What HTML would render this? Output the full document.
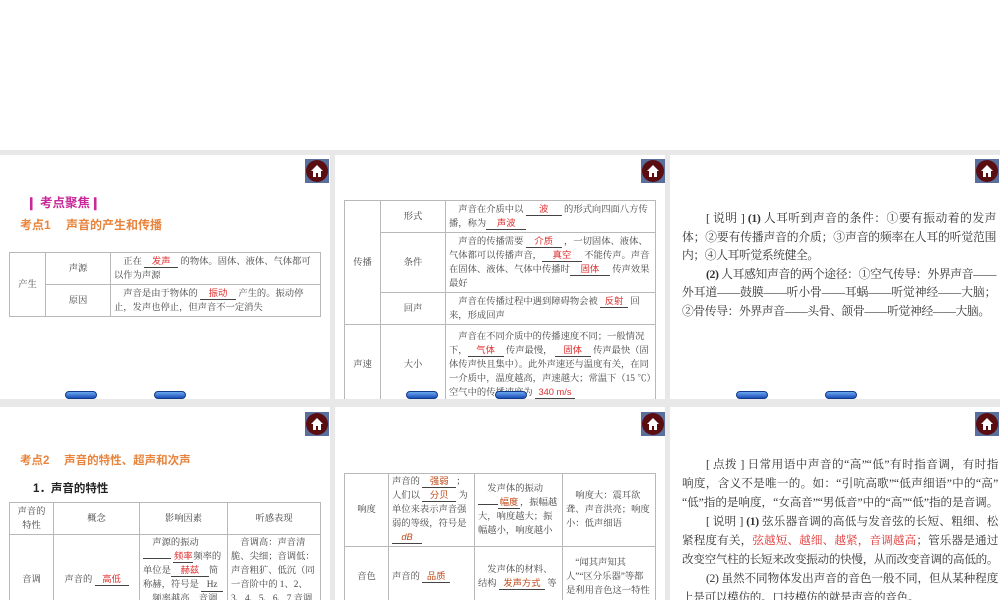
<!DOCTYPE html>
<html><head><meta charset="utf-8"><style>
*{margin:0;padding:0;box-sizing:border-box}
html,body{width:1000px;height:600px;overflow:hidden}
body{background:#fff;position:relative;font-family:"Liberation Serif","Noto Serif CJK SC",serif;color:#333}
.gray{position:absolute;left:0;top:150px;width:1000px;height:450px;background:#e8e8e8}
.s{position:absolute;background:#fff;overflow:hidden;width:330px;height:244px}
.home{position:absolute;width:24px;height:24px;background:#5a6f9c;}
.home:after{content:"";position:absolute;left:1px;top:1px;width:22px;height:22px;border-radius:50%;background:#5a0e12}
.home svg{position:absolute;left:5px;top:5px;z-index:2}
.nav{position:absolute;width:32px;height:8px;border-radius:4px;background:linear-gradient(#6aa8f0,#1d4fb8);border:1px solid #123a8a}
.a{position:absolute;white-space:nowrap}
table{position:absolute;border-collapse:collapse;font-size:9.3px;line-height:14px;color:#444}
td{border:1px solid #b8b8b8;vertical-align:middle;padding:1px 3px}
td.c{text-align:center}
.r{color:#e03030;font-family:"Liberation Sans","Noto Sans CJK SC",sans-serif}
.u{display:inline-block;border-bottom:1px solid #444;min-width:20px;text-align:center;line-height:12px}
.p{position:absolute;font-size:11.8px;line-height:18.5px;color:#333;font-family:"Liberation Serif","Noto Serif CJK SC",serif;letter-spacing:-0.4px}
.p div{text-indent:24px;text-align:justify}
.q{position:absolute;font-size:11.6px;line-height:19px;color:#333;font-family:"Liberation Serif","Noto Serif CJK SC",serif;letter-spacing:-0.3px}
.q div{white-space:nowrap;text-align:justify;text-align-last:justify;overflow:hidden}
.q div.i{padding-left:24px}
.q div.e{text-align-last:left}
</style></head><body>
<div class="gray"></div>

<!-- slide 1 -->
<div class="s" style="left:0;top:155px">
 <div class="home" style="left:305px;top:4px"><svg width="14" height="14" viewBox="0 0 14 14"><path d="M7 1L1 7h2v6h3V9h2v4h3V7h2z" fill="#fff"/></svg></div>
 <div class="a" style="left:26px;top:37px;font-size:12.5px;color:#c8289a;font-family:'Liberation Sans','Noto Sans CJK SC',sans-serif;font-weight:bold">❙ 考点聚焦❙</div>
 <div class="a" style="left:20px;top:61px;font-size:12px;color:#e8843c;font-family:'Liberation Sans','Noto Sans CJK SC',sans-serif;font-weight:bold">考点1　 声音的产生和传播</div>
 <table style="left:9px;top:97px;width:312px">
  <tr style="height:32px"><td class="c" rowspan="2" style="width:36px">产生</td><td class="c" style="width:65px">声源</td><td>　正在 <span class="u r" style="width:34px">发声</span> 的物体。固体、液体、气体都可以作为声源</td></tr>
  <tr style="height:32px"><td class="c">原因</td><td>　声音是由于物体的 <span class="u r" style="width:36px">振动</span> 产生的。振动停止，发声也停止，但声音不一定消失</td></tr>
 </table>
 <div class="nav" style="left:65px;top:236px"></div><div class="nav" style="left:154px;top:236px"></div>
</div>

<!-- slide 2 -->
<div class="s" style="left:335px;top:155px">
 <div class="home" style="left:306px;top:4px"><svg width="14" height="14" viewBox="0 0 14 14"><path d="M7 1L1 7h2v6h3V9h2v4h3V7h2z" fill="#fff"/></svg></div>
 <table style="left:9px;top:45px;width:312px">
  <tr style="height:32px"><td class="c" rowspan="3" style="width:36px">传播</td><td class="c" style="width:65px">形式</td><td>　声音在介质中以 <span class="u r" style="width:36px">波</span> 的形式向四面八方传播，称为<span class="u r" style="width:40px">声波</span></td></tr>
  <tr style="height:60px"><td class="c">条件</td><td>　声音的传播需要 <span class="u r" style="width:36px">介质</span> ，一切固体、液体、气体都可以传播声音，<span class="u r" style="width:40px">真空</span> 不能传声。声音在固体、液体、气体中传播时<span class="u r" style="width:40px">固体</span> 传声效果最好</td></tr>
  <tr style="height:32px"><td class="c">回声</td><td>　声音在传播过程中遇到障碍物会被 <span class="u r" style="width:28px">反射</span> 回来，形成回声</td></tr>
  <tr style="height:80px"><td class="c">声速</td><td class="c">大小</td><td>　声音在不同介质中的传播速度不同；一般情况下，<span class="u r" style="width:36px">气体</span> 传声最慢， <span class="u r" style="width:36px">固体</span> 传声最快（固体传声快且集中）。此外声速还与温度有关，在同一介质中，温度越高，声速越大；常温下（15 ℃）空气中的传播速度为 <span class="u r" style="width:40px">340 m/s</span></td></tr>
 </table>
 <div class="nav" style="left:71px;top:236px"></div><div class="nav" style="left:160px;top:236px"></div>
</div>

<!-- slide 3 -->
<div class="s" style="left:670px;top:155px">
 <div class="home" style="left:305px;top:4px"><svg width="14" height="14" viewBox="0 0 14 14"><path d="M7 1L1 7h2v6h3V9h2v4h3V7h2z" fill="#fff"/></svg></div>
 <div class="p" style="left:12px;top:54px;width:314px">
  <div>[ 说明 ] <b>(1)</b> 人耳听到声音的条件：①要有振动着的发声体；②要有传播声音的介质；③声音的频率在人耳的听觉范围内；④人耳听觉系统健全。</div>
  <div><b>(2)</b> 人耳感知声音的两个途径：①空气传导：外界声音——外耳道——鼓膜——听小骨——耳蜗——听觉神经——大脑；②骨传导：外界声音——头骨、颌骨——听觉神经——大脑。</div>
 </div>
 <div class="nav" style="left:66px;top:236px"></div><div class="nav" style="left:155px;top:236px"></div>
</div>

<!-- slide 4 -->
<div class="s" style="left:0;top:407px;height:193px">
 <div class="home" style="left:305px;top:5px"><svg width="14" height="14" viewBox="0 0 14 14"><path d="M7 1L1 7h2v6h3V9h2v4h3V7h2z" fill="#fff"/></svg></div>
 <div class="a" style="left:20px;top:45px;font-size:11.5px;color:#e8843c;font-family:'Liberation Sans','Noto Sans CJK SC',sans-serif;font-weight:bold">考点2　 声音的特性、超声和次声</div>
 <div class="a" style="left:33px;top:73px;font-size:11.5px;color:#222;font-weight:bold;font-family:'Liberation Sans','Noto Sans CJK SC',sans-serif">1．声音的特性</div>
 <table style="left:9px;top:95px;width:312px">
  <tr style="height:32px"><td class="c" style="width:44px">声音的<br>特性</td><td class="c" style="width:86px">概念</td><td class="c" style="width:88px">影响因素</td><td class="c">听感表现</td></tr>
  <tr style="height:90px"><td class="c">音调</td><td class="c">声音的 <span class="u r" style="width:34px">高低</span></td><td style="vertical-align:top">　声源的振动 <span class="u" style="width:28px"></span> <span class="u r" style="width:14px">频率</span>频率的单位是<span class="u r" style="width:38px">赫兹</span>简称赫，符号是 <span class="u" style="width:22px">Hz</span>，频率越高，音调越高</td><td style="vertical-align:top">　音调高：声音清脆、尖细；音调低：声音粗犷、低沉（同一音阶中的 1、2、3、4、5、6、7 音调</td></tr>
 </table>
</div>

<!-- slide 5 -->
<div class="s" style="left:335px;top:407px;height:193px">
 <div class="home" style="left:306px;top:5px"><svg width="14" height="14" viewBox="0 0 14 14"><path d="M7 1L1 7h2v6h3V9h2v4h3V7h2z" fill="#fff"/></svg></div>
 <table style="left:9px;top:66px;width:312px">
  <tr style="height:72px"><td class="c" style="width:44px">响度</td><td style="width:86px">声音的 <span class="u r" style="width:34px;color:#c04a1a">强弱</span>；人们以 <span class="u r" style="width:34px;color:#c04a1a">分贝</span> 为单位来表示声音强弱的等级，符号是 <span class="u r" style="width:30px;color:#c04a1a"><i>dB</i></span></td><td style="width:88px">　发声体的振动 <span class="u" style="width:14px"></span><span class="u r" style="width:22px;color:#c04a1a">幅度</span>，振幅越大，响度越大；振幅越小，响度越小</td><td>　响度大：震耳欲聋、声音洪亮；响度小：低声细语</td></tr>
  <tr style="height:60px"><td class="c">音色</td><td>声音的 <span class="u r" style="width:28px;color:#c04a1a">品质</span></td><td>　发声体的材料、结构 <span class="u r" style="width:46px;color:#c04a1a">发声方式</span> 等</td><td>　“闻其声知其人”“区分乐器”等都是利用音色这一特性</td></tr>
 </table>
</div>

<!-- slide 6 -->
<div class="s" style="left:670px;top:407px;height:193px">
 <div class="home" style="left:305px;top:5px"><svg width="14" height="14" viewBox="0 0 14 14"><path d="M7 1L1 7h2v6h3V9h2v4h3V7h2z" fill="#fff"/></svg></div>
 <div class="q" style="left:12px;top:48px;width:316px">
  <div class="i">[ 点拨 ] 日常用语中声音的“高”“低”有时指音调，有时指</div>
  <div>响度，含义不是唯一的。如：“引吭高歌”“低声细语”中的“高”</div>
  <div>“低”指的是响度，“女高音”“男低音”中的“高”“低”指的是音调。</div>
  <div class="i">[ 说明 ] <b>(1)</b> 弦乐器音调的高低与发音弦的长短、粗细、松</div>
  <div>紧程度有关，<span style="color:#e03030">弦越短、越细、越紧，音调越高</span>；管乐器是通过</div>
  <div>改变空气柱的长短来改变振动的快慢，从而改变音调的高低的。</div>
  <div class="i">(2) 虽然不同物体发出声音的音色一般不同，但从某种程度</div>
  <div class="e">上是可以模仿的。口技模仿的就是声音的音色。</div>
 </div>
</div>
</body></html>
